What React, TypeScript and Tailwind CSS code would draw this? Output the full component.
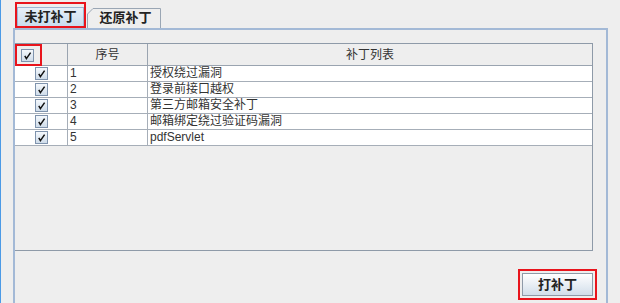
import React from 'react';

const rows = [
  { id: '1', name: '授权绕过漏洞' },
  { id: '2', name: '登录前接口越权' },
  { id: '3', name: '第三方邮箱安全补丁' },
  { id: '4', name: '邮箱绑定绕过验证码漏洞' },
  { id: '5', name: 'pdfServlet' },
];

const FONT = { fontFamily: '"Liberation Sans", "Noto Sans CJK SC", sans-serif' };

function Check() {
  return (
    <div className="w-[13px] h-[13px] border border-[#7f93ad] bg-gradient-to-b from-[#f4f8fc] to-[#cfdcea] flex items-center justify-center">
      <svg width="9" height="9" viewBox="0 0 9 9">
        <path d="M1.8 4.8 L3.4 7.6 L7.6 1.6" fill="none" stroke="#111" strokeWidth="1.5" />
      </svg>
    </div>
  );
}

export default function App() {
  return (
    <div className="w-[620px] h-[303px] bg-[#eeeeee] border-l border-[#4c9ae6] pl-[12px] pr-[12px] flex flex-col overflow-hidden text-[#222]" style={FONT}>
      {/* tabs */}
      <div className="h-[28px] flex items-end shrink-0">
        <div className="ml-[2px] w-[71px] h-[26px] border-2 border-[#e8141c] flex">
          <div className="flex-1 mt-[3px] bg-gradient-to-b from-[#e6eff8] to-[#c9dcee] border-t border-x border-[#9fb6d2] flex items-center justify-center text-[13px] font-bold">
            未打补丁
          </div>
        </div>
        <div className="relative ml-[1px] w-[74px] h-[20px] flex items-center justify-center text-[13px] font-bold pl-[3px]">
          <svg className="absolute inset-0" width="74" height="20" viewBox="0 0 74 20">
            <path d="M0.5 20 L0.5 6 L6 0.5 L73.5 0.5 L73.5 20" fill="#eeeeee" stroke="#9aa6b4" />
          </svg>
          <span className="relative">还原补丁</span>
        </div>
      </div>

      {/* panel */}
      <div className="flex-1 border-t-2 border-x-2 border-[#a3b9d6] pt-[13px] flex flex-col">
        <div className="h-[208px] mr-[13px] border-t border-r border-b border-[#8e9aa8] shrink-0 bg-[#eeeeee]">
          <div className="grid grid-cols-[53px_80px_1fr] h-[22px] border-b border-[#9aa4b0] text-[12px] text-[#333]">
            <div className="border-r border-[#9aa4b0] flex items-end">
              <div className="w-[27px] h-[22px] border-2 border-[#e8141c] flex items-center justify-start pl-[4px]">
                <Check />
              </div>
            </div>
            <div className="border-r border-[#9aa4b0] flex items-center justify-center">序号</div>
            <div className="flex items-center justify-center">补丁列表</div>
          </div>
          {rows.map((r) => (
            <div key={r.id} className="grid grid-cols-[53px_80px_1fr] h-[16px] border-b border-[#a6aeb8] bg-white text-[12px] leading-[15px] text-[#333]">
              <div className="border-r border-[#a6aeb8] flex items-center justify-center">
                <Check />
              </div>
              <div className="border-r border-[#a6aeb8] pl-[2px]">{r.id}</div>
              <div className="pl-[2px]">{r.name}</div>
            </div>
          ))}
        </div>

        <div className="flex justify-end mr-[9px] mt-[18px]">
          <div className="w-[79px] h-[31px] border-2 border-[#e8141c] p-[2px]">
            <div className="w-full h-full border border-[#8e9aa8] bg-gradient-to-b from-[#ffffff] to-[#d2deea] flex items-center justify-center text-[13px] font-bold">
              打补丁
            </div>
          </div>
        </div>
      </div>
    </div>
  );
}
